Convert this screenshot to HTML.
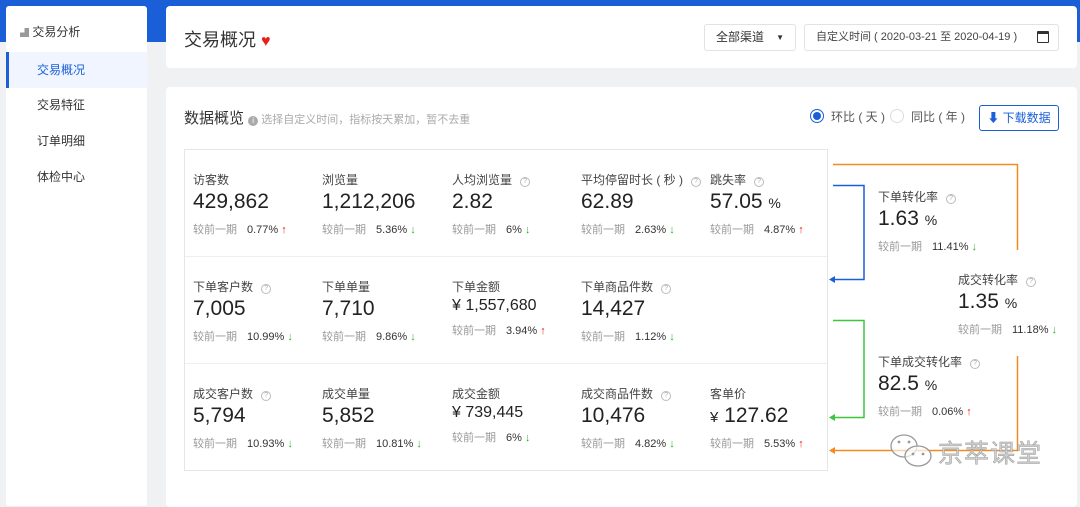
<!DOCTYPE html>
<html><head><meta charset="utf-8"><style>
*{margin:0;padding:0;box-sizing:border-box}
body{width:1080px;height:500px;background:#f0f1f3;position:relative;overflow:hidden;font-family:"Liberation Sans","Noto Sans CJK SC",sans-serif;color:#333}
.a{position:absolute}
.top{left:0;top:0;width:1080px;height:42px;background:#1a5fd8}
.side{left:6px;top:6px;width:141px;height:500px;background:#fff;border-radius:3px}
.card{background:#fff;border-radius:4px}
.nav{position:absolute;left:0;width:141px;height:36px;line-height:36px;padding-left:31px;font-size:12px;color:#333}
.c{position:absolute;width:129px;height:107px}
.c .l{position:absolute;left:9px;top:21px;font-size:12px;color:#444;white-space:nowrap}
.c .v{position:absolute;left:9px;top:40px;font-size:21px;color:#222;white-space:nowrap}
.c .v.m{font-size:16px;top:40px}
.c .p{position:absolute;left:9px;top:71px;font-size:11px;color:#999;white-space:nowrap}
.c .p.m{top:65px}
.p b{font-weight:normal;color:#333;margin-left:10px}
.q{display:inline-block;width:10px;height:10px;border:1px solid #bbb;border-radius:50%;font-size:7px;line-height:8px;text-align:center;color:#aaa;margin-left:8px;vertical-align:1px}
.up{color:#e8201a;font-weight:bold;margin-left:3px}
.dn{color:#2db52d;font-weight:bold;margin-left:3px}
.pc{font-size:14px}
</style></head><body>
<div class="a top"></div>
<div class="a side">
 <div style="position:absolute;left:14px;top:17px;font-size:12px;color:#333"><span style="font-size:9px;color:#999">▟</span> 交易分析</div>
 <div class="nav" style="top:46px;background:#f0f5ff;color:#1a5fd8;border-left:3px solid #1a5fd8;padding-left:28px">交易概况</div>
 <div class="nav" style="top:81px">交易特征</div>
 <div class="nav" style="top:117px">订单明细</div>
 <div class="nav" style="top:153px">体检中心</div>
</div>
<div class="a card" style="left:166px;top:6px;width:911px;height:62px">
 <div class="a" style="left:18px;top:20px;font-size:18px;color:#333">交易概况 <span style="color:#e8201a;font-size:16px">♥</span></div>
 <div class="a" style="left:538px;top:18px;width:92px;height:27px;border:1px solid #e2e2e2;border-radius:3px;font-size:12px;line-height:25px;padding-left:11px">全部渠道<span style="position:absolute;right:11px;font-size:8px">▼</span></div>
 <div class="a" style="left:638px;top:18px;width:255px;height:27px;border:1px solid #e2e2e2;border-radius:3px;font-size:11px;line-height:25px;padding-left:11px;color:#444">自定义时间 ( 2020-03-21 至 2020-04-19 )<span style="position:absolute;right:9px;top:6px;width:12px;height:12px;border:1.5px solid #333;border-top-width:3px;border-radius:1px"></span></div>
</div>
<div class="a card" style="left:166px;top:87px;width:911px;height:420px">
 <div class="a" style="left:18px;top:20px;font-size:15px;color:#333">数据概览 <span style="font-size:11px;color:#aaa"><span style="display:inline-block;width:10px;height:10px;border-radius:50%;background:#aaa;color:#fff;font-size:8px;text-align:center;line-height:10px">i</span> 选择自定义时间，指标按天累加，暂不去重</span></div>
 <div class="a" style="left:644px;top:22px;width:14px;height:14px;border:1px solid #1a5fd8;border-radius:50%"><div style="position:absolute;left:2px;top:2px;width:8px;height:8px;border-radius:50%;background:#1a5fd8"></div></div>
 <div class="a" style="left:665px;top:21px;font-size:12px;color:#555">环比 ( 天 )</div>
 <div class="a" style="left:724px;top:22px;width:14px;height:14px;border:1px solid #ddd;border-radius:50%"></div>
 <div class="a" style="left:745px;top:21px;font-size:12px;color:#555">同比 ( 年 )</div>
 <div class="a" style="left:813px;top:18px;width:80px;height:26px;border:1px solid #1a5fd8;border-radius:3px;font-size:12px;color:#1a5fd8;line-height:24px;text-align:center">⬇ 下载数据</div>
</div>
<div class="a" style="left:184px;top:149px;width:644px;height:322px;border:1px solid #e6e6e6;background:#fff">
 <div class="a" style="left:0;top:106px;width:642px;height:1px;background:#eee"></div>
 <div class="a" style="left:0;top:213px;width:642px;height:1px;background:#eee"></div>
</div>
<div class="c" style="left:184px;top:150px"><div class="l">访客数</div><div class="v">429,862</div><div class="p">较前一期<b>0.77%</b><span class="up">↑</span></div></div>
<div class="c" style="left:313px;top:150px"><div class="l">浏览量</div><div class="v">1,212,206</div><div class="p">较前一期<b>5.36%</b><span class="dn">↓</span></div></div>
<div class="c" style="left:443px;top:150px"><div class="l">人均浏览量<span class="q">?</span></div><div class="v">2.82</div><div class="p">较前一期<b>6%</b><span class="dn">↓</span></div></div>
<div class="c" style="left:572px;top:150px"><div class="l">平均停留时长 ( 秒 )<span class="q">?</span></div><div class="v">62.89</div><div class="p">较前一期<b>2.63%</b><span class="dn">↓</span></div></div>
<div class="c" style="left:701px;top:150px"><div class="l">跳失率<span class="q">?</span></div><div class="v">57.05 <span class="pc">%</span></div><div class="p">较前一期<b>4.87%</b><span class="up">↑</span></div></div>
<div class="c" style="left:184px;top:257px"><div class="l">下单客户数<span class="q">?</span></div><div class="v">7,005</div><div class="p">较前一期<b>10.99%</b><span class="dn">↓</span></div></div>
<div class="c" style="left:313px;top:257px"><div class="l">下单单量</div><div class="v">7,710</div><div class="p">较前一期<b>9.86%</b><span class="dn">↓</span></div></div>
<div class="c" style="left:443px;top:257px"><div class="l">下单金额</div><div class="v m">¥ 1,557,680</div><div class="p m">较前一期<b>3.94%</b><span class="up">↑</span></div></div>
<div class="c" style="left:572px;top:257px"><div class="l">下单商品件数<span class="q">?</span></div><div class="v">14,427</div><div class="p">较前一期<b>1.12%</b><span class="dn">↓</span></div></div>
<div class="c" style="left:184px;top:364px"><div class="l">成交客户数<span class="q">?</span></div><div class="v">5,794</div><div class="p">较前一期<b>10.93%</b><span class="dn">↓</span></div></div>
<div class="c" style="left:313px;top:364px"><div class="l">成交单量</div><div class="v">5,852</div><div class="p">较前一期<b>10.81%</b><span class="dn">↓</span></div></div>
<div class="c" style="left:443px;top:364px"><div class="l">成交金额</div><div class="v m">¥ 739,445</div><div class="p m">较前一期<b>6%</b><span class="dn">↓</span></div></div>
<div class="c" style="left:572px;top:364px"><div class="l">成交商品件数<span class="q">?</span></div><div class="v">10,476</div><div class="p">较前一期<b>4.82%</b><span class="dn">↓</span></div></div>
<div class="c" style="left:701px;top:364px"><div class="l">客单价</div><div class="v"><span style="font-size:15px">¥</span> 127.62</div><div class="p">较前一期<b>5.53%</b><span class="up">↑</span></div></div>
<div class="c" style="left:869px;top:167px"><div class="l">下单转化率<span class="q">?</span></div><div class="v">1.63 <span class="pc">%</span></div><div class="p">较前一期<b>11.41%</b><span class="dn">↓</span></div></div>
<div class="c" style="left:949px;top:250px"><div class="l">成交转化率<span class="q">?</span></div><div class="v">1.35 <span class="pc">%</span></div><div class="p">较前一期<b>11.18%</b><span class="dn">↓</span></div></div>
<div class="c" style="left:869px;top:332px"><div class="l">下单成交转化率<span class="q">?</span></div><div class="v">82.5 <span class="pc">%</span></div><div class="p">较前一期<b>0.06%</b><span class="up">↑</span></div></div>
<svg class="a" style="left:0;top:0" width="1080" height="500">
 <g fill="none" stroke-width="1.5">
  <path d="M833 164.5H1017.5V250" stroke="#f28c1f"/>
  <path d="M833 185.5H864V279.5H834" stroke="#1a5fd8"/>
  <path d="M833 320.5H864V417.5H834" stroke="#3ec53e"/>
  <path d="M1017.5 356V450.5H834" stroke="#f28c1f"/>
 </g>
 <path d="M829 279.5l6-3.5v7z" fill="#1a5fd8"/>
 <path d="M829 417.5l6-3.5v7z" fill="#3ec53e"/>
 <path d="M829 450.5l6-3.5v7z" fill="#f28c1f"/>
 <g fill="none" stroke="#999" stroke-width="1.3">
  <ellipse cx="904" cy="446" rx="13" ry="11" fill="rgba(255,255,255,.6)"/>
  <ellipse cx="918" cy="456" rx="13" ry="10" fill="rgba(255,255,255,.7)"/>
 </g>
 <g fill="#999"><circle cx="899" cy="442" r="1.4"/><circle cx="909" cy="442" r="1.4"/><circle cx="913" cy="454" r="1.4"/><circle cx="923" cy="454" r="1.4"/></g>
 <text x="938" y="462" font-size="25" fill="#d0d0d0" stroke="#999" stroke-width=".5" font-family="Noto Sans CJK SC,sans-serif" letter-spacing="1">京萃课堂</text>
</svg>
</body></html>
